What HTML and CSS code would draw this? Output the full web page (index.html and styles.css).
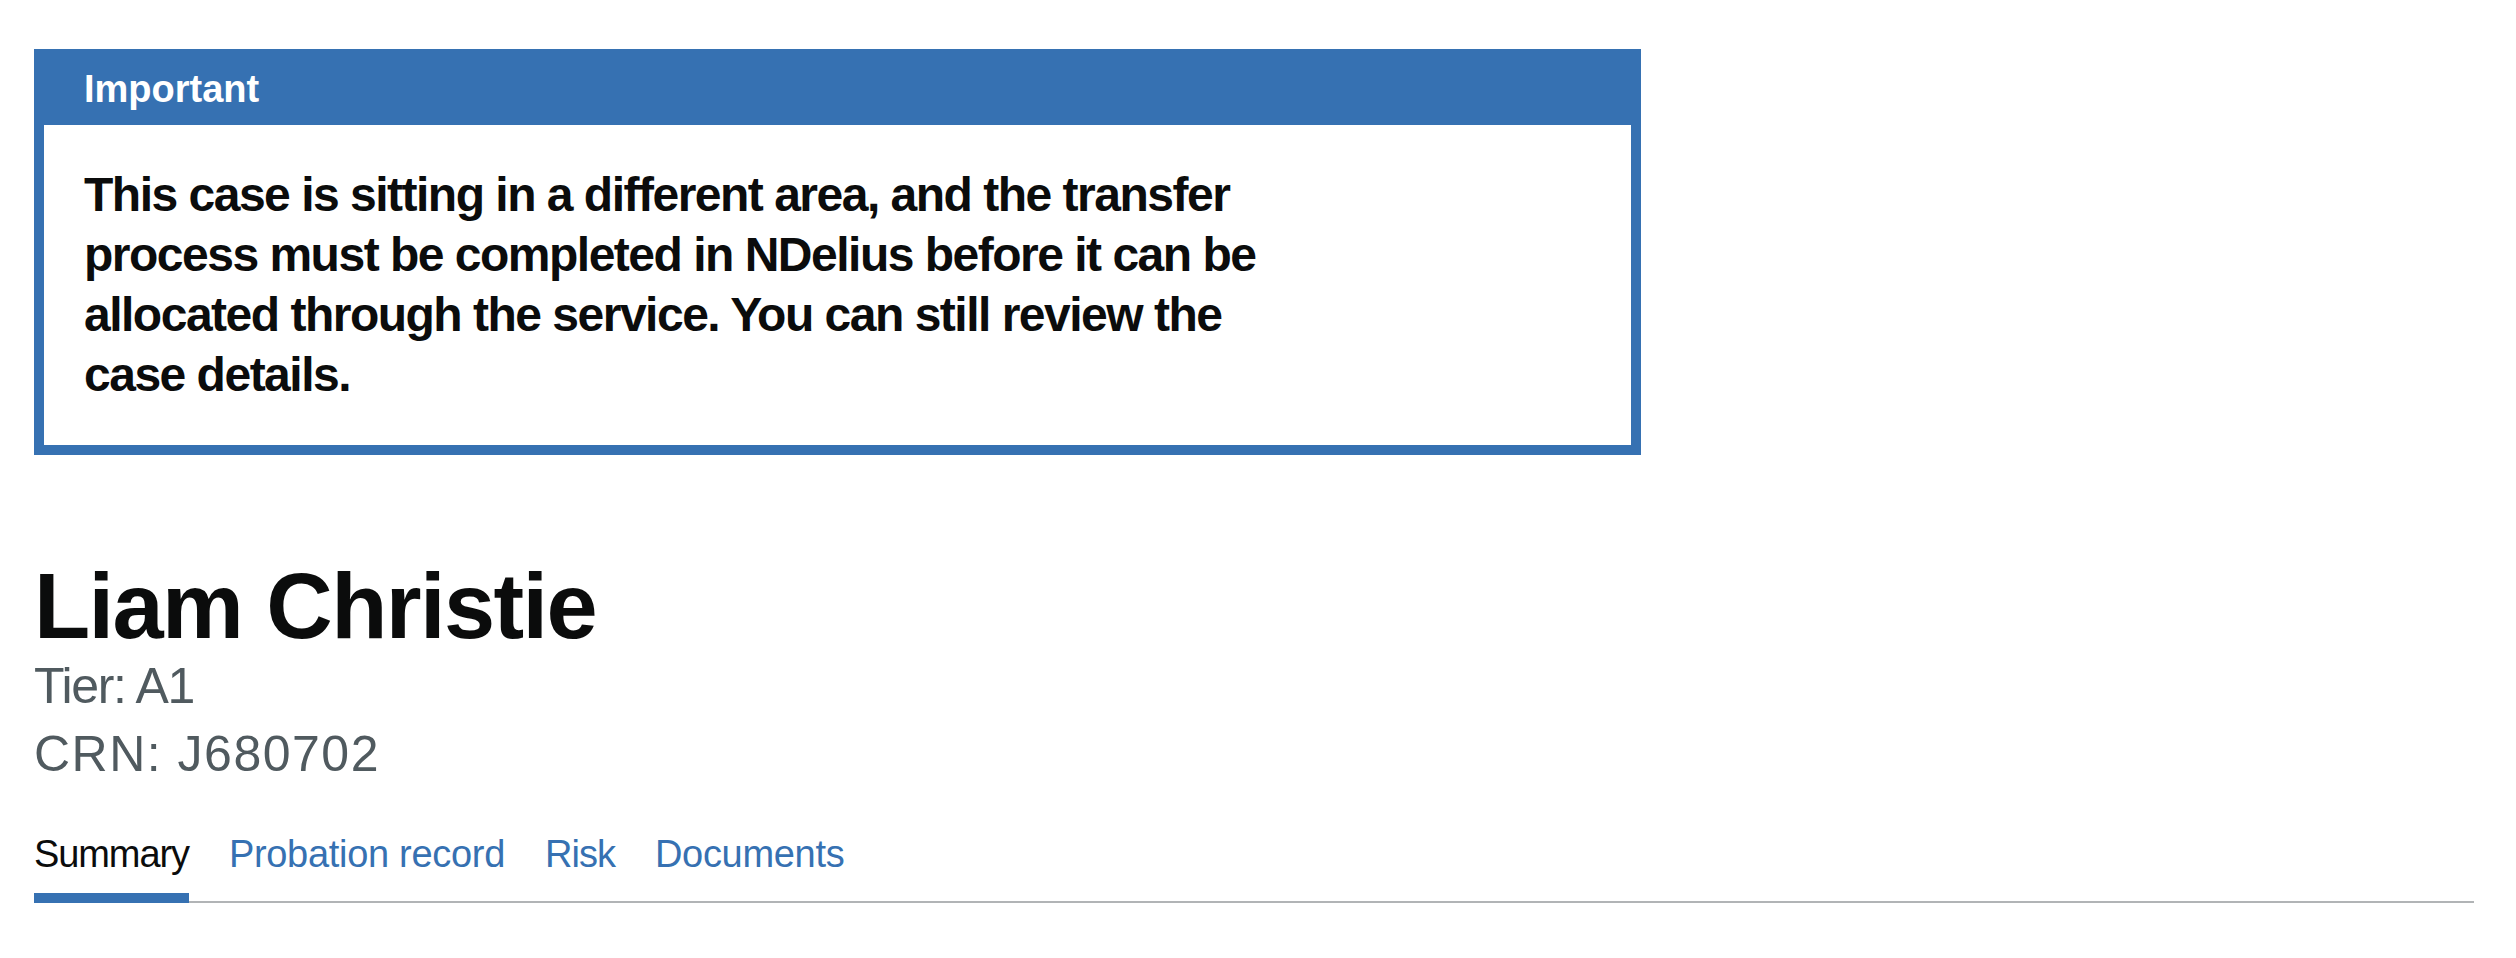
FILE: index.html
```html
<!DOCTYPE html>
<html lang="en">
<head>
<meta charset="utf-8">
<title>Liam Christie - Summary</title>
<link rel="stylesheet" href="styles.css">
</head>
<body>
<main class="page">
  <div class="banner" role="region" aria-labelledby="banner-title">
    <div class="banner__header">
      <h2 class="banner__title" id="banner-title">Important</h2>
    </div>
    <div class="banner__content">
      <p class="banner__heading">This case is sitting in a different area, and the transfer process must be completed in NDelius before it can be allocated through the service. You can still review the case details.</p>
    </div>
  </div>

  <h1 class="person__name">Liam Christie</h1>
  <p class="person__meta person__meta--tier">Tier: A1</p>
  <p class="person__meta person__meta--crn">CRN: J680702</p>

  <nav class="subnav" aria-label="Case navigation">
    <ul class="subnav__list">
      <li class="subnav__item"><a class="subnav__link subnav__link--current" href="#" aria-current="page">Summary</a></li>
      <li class="subnav__item"><a class="subnav__link" href="#">Probation record</a></li>
      <li class="subnav__item"><a class="subnav__link subnav__link--short" href="#">Risk</a></li>
      <li class="subnav__item"><a class="subnav__link" href="#">Documents</a></li>
    </ul>
  </nav>
</main>
</body>
</html>
```

FILE: styles.css
```css
* { box-sizing: border-box; }

html, body {
  margin: 0;
  padding: 0;
  background: #ffffff;
}

body {
  font-family: "Liberation Sans", Arial, sans-serif;
  color: #0b0c0c;
}

.page {
  padding: 49px 42px 0 34px;
}

/* Notification banner */
.banner {
  width: 1607px;
  border: 10px solid #3671b2;
  background: #3671b2;
}

.banner__header {
  padding: 5px 40px 11px;
}

.banner__title {
  margin: 0;
  font-size: 38px;
  line-height: 50px;
  font-weight: 700;
  color: #ffffff;
}

.banner__content {
  background: #ffffff;
  padding: 40px;
}

.banner__heading {
  margin: 0;
  max-width: 1230px;
  font-size: 48px;
  line-height: 60px;
  font-weight: 700;
  letter-spacing: -1.5px;
  color: #0b0c0c;
}

/* Person header */
.person__name {
  margin: 105px 0 0;
  font-size: 92px;
  line-height: 92px;
  font-weight: 700;
  letter-spacing: -1.6px;
  color: #0b0c0c;
}

.person__meta {
  margin: 0;
  font-size: 50px;
  line-height: 68px;
  font-weight: 400;
  color: #505a5f;
}

.person__meta--tier {
  letter-spacing: -1.3px;
}

.person__meta--crn {
  letter-spacing: 1.5px;
}

/* Sub navigation */
.subnav {
  margin-top: 17px;
}

.subnav__list {
  display: flex;
  margin: 0;
  padding: 0;
  list-style: none;
  box-shadow: inset 0 -2px 0 #b1b4b6;
}

.subnav__item {
  margin-right: 40px;
}

.subnav__link {
  display: block;
  padding: 24px 0;
  font-size: 38px;
  line-height: 50px;
  letter-spacing: -0.3px;
  color: #3671b2;
  text-decoration: none;
}

.subnav__link--short {
  letter-spacing: -1px;
}

.subnav__link--current {
  color: #0b0c0c;
  letter-spacing: -1.1px;
  box-shadow: inset 0 -10px 0 #3671b2;
}
```
